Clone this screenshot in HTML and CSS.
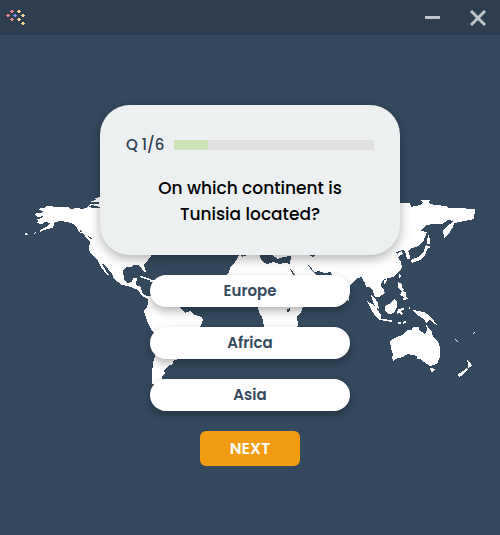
FILE: index.html
```html
<!DOCTYPE html>
<html lang="en">
<head>
<meta charset="utf-8">
<meta name="viewport" content="width=device-width, initial-scale=1">
<title>Continent quiz</title>
<link rel="stylesheet" href="styles.css">
</head>
<body>
<header class="titlebar">
  <svg class="logo" viewBox="0 0 20 17" aria-hidden="true">
    <path fill="#e58386" d="M5 1h2v1h1v1H7v1H5V3H4V2h1zM1 5h2v1h1v1H3v1H1V7H0V6h1zM5 9h2v1h1v1H7v1H5v-1H4v-1h1z"/>
    <path fill="#748bee" d="M8 5h2v1h1v1h-1v1H8V7H7V6h1z"/>
    <path fill="#f7da91" d="M12 1h2v1h1v1h-1v1h-2V3h-1V2h1zM16 5h2v1h1v1h-1v1h-2V7h-1V6h1zM12 9h2v1h1v1h-1v1h-2v-1h-1v-1h1zM16 13h2v1h1v1h-1v1h-2v-1h-1v-1h1z"/>
  </svg>
  <div class="window-controls">
    <button class="window-button" type="button" aria-label="Minimize">
      <svg viewBox="0 0 16 16" aria-hidden="true"><path d="M0 7.5h15" stroke-width="3"/></svg>
    </button>
    <button class="window-button" type="button" aria-label="Close">
      <svg viewBox="0 0 16 16" aria-hidden="true"><path d="M1 1l14 14M15 1L1 15" stroke-width="3"/></svg>
    </button>
  </div>
</header>
<main class="stage">
  <svg class="map" viewBox="0 35 500 500" aria-hidden="true" shape-rendering="crispEdges">
    <g fill="#fff">
      <!-- North and Central America -->
      <path d="M101 208L93 208 88 207 82 209 77 208 70 209 68 207 61 207 54 207 52 206 46 206 45 208 40 208 38 210 43 211 42 213 36 213 35 215 38 217 43 216 42 218 37 219 38 221 36 223 42 224 45 222 50 223 48 226 40 230 40 232 47 229 53 228 55 222 60 221 67 222 73 224 77 228 79 232 84 234 86 238 90 241 89 250 91 254 98 261 101 267 107 275 109 275 106 271 102 264 104 264 112 274 114 279 122 285 127 286 133 288 138 290 142 296 148 299 152 296 147 296 142 293 141 287 136 285 137 278 133 278 132 282 128 283 124 280 123 270 126 267 131 267 133 265 138 265 141 267 143 271 145 273 146 271 144 265 148 260 151 256 150 254 160 240 130 210z"/>
      <path d="M101 197L95 198 96 200 91 201 91 202 99 202 99 204 90 204 88 207 92 205 100 207zM25 233l3 1v1h-3zM33 234l2-2h1l-2 2zM140 276l5 1 5 2 2 2-4-1-8-3zM150 280h5v2h-5z"/>
      <!-- South America -->
      <path d="M149 296L148 302 147 308 144 310 145 315 148 323 151 329 155 334 156 346 155 357 153 363 152 373 152 384 158 386 163 380 162 377 165 373 164 371 166 368 168 366 173 364 173 361 178 359 185 348 195 340 198 328 201 325 203 320 202 317 195 315 190 311 185 313 180 308 170 298z"/>
      <!-- Africa, Europe and Asia -->
      <path d="M240 254L235 262 230 268 229 272 227 274 226 290 240 302 256 302 258 307 259 312 262 317 264 326 266 340 274 345 286 341 296 330 298 325 297 317 301 312 303 307 313 295 321 281 329 277 339 297 349 301 350 285 357 278 362 277 363 281 365 282 366 287 369 287 373 291 375 297 379 297 385 293 384 290 381 286 382 281 385 279 393 277 400 271 402 267 401 262 398 257 403 254 402 251 397 254 396 252 402 250 405 251 407 259 410 259 410 256 408 251 412 248 418 246 423 242 426 235 427 232 420 231 427 225 432 224 442 224 448 220 453 221 452 223 448 225 443 230 444 238 450 232 453 227 454 223 465 221 474 219 475 209 470 209 462 208 448 208 446 206 436 205 430 204 428 202 430 200 420 200 423 203 420 205 411 207 410 203 400 203 350 204 300 210z"/>
      <path d="M428 233l2 7v4h-3zM426 245l5 2-4 2-2 7-5 4-8 3-1-3 7-3 5-4zM400 273l1 3-2 2v-4zM384 280l3-1-1 4-2 1z"/>
      <!-- South-east Asia -->
      <path d="M367 301l5 3 5 5 4 6v4l11 1v2l-12-2-5-4-4-7zM371 295l4 3 3 5 1 6-3-1-3-6zM395 299l2 3v5l-3 6-5 1-4-3v-5l4-2 3-3zM398 282l4 2v4l2 2-3 1-3-4zM402 291l4 1v4l2 3-5 1 1-3-4-2zM398 309l6-1v2l-4 1 3 2-1 3-3-3-2 1zM409 306l1 2-1 2zM398 322h3v2h-3zM404 321l3 1-4 2zM413 310l5 1 6 1 6 4 4 5 3 4-3-1-4-4-4 3-2-4-5-3-4-3z"/>
      <!-- Australia and New Zealand -->
      <path d="M390 341L395 338 402 335 407 330 412 330 413 327 419 327 419 330 425 334 427 330 426 324 428 327 432 332 433 337 438 342 440 347 440 357 437 364 430 366 427 364 420 359 417 359 417 356 408 354 403 357 398 358 393 361 392 357 393 355 391 348z"/>
      <path d="M430 368l5 1-2 3h-2zM455 339l3 2-1 1zM472 334l3-2-2 3zM467 360l4 4 1 2-4 2v-5zM466 368l2 1-5 6-4 2-2-2 6-4z"/>
    </g>
    <!-- Seas and lakes -->
    <g fill="#34495e">
      <path d="M260 255l1 5 2 2 4 2 6-2 6 2 6-1 5 1 1-8-8 1-5 2-6-4zM240 255h7l-5 2zM290 269l2 1 3 5h-2zM308 265l3 2 3 5 5-1 5 2 7-1 1 3h-15l-4-3zM309 255h6l-2 2zM287 309l3-1v3l-3 1zM80 230l2 1-1 2zM88 236l4 2-1 2zM181 308l5-1-1 2 2-1v3l-3-1z"/>
    </g>
  </svg>
  <section class="quiz">
    <div class="card">
      <div class="status">
        <label class="count" for="progress">Q 1/6</label>
        <progress class="progress" id="progress" value="1" max="6"></progress>
      </div>
      <h1 class="question">On which continent is Tunisia located?</h1>
    </div>
    <button class="answer" type="button">Europe</button>
    <button class="answer" type="button">Africa</button>
    <button class="answer" type="button">Asia</button>
    <button class="next" type="button">NEXT</button>
  </section>
</main>
</body>
</html>
```
FILE: styles.css
```css
* {
  box-sizing: border-box;
}

body {
  margin: 0;
  min-height: 100vh;
  display: flex;
  flex-direction: column;
  background: #34495e;
  color: #2c3e50;
  font-family: Poppins, Inter, sans-serif;
}

button {
  border: 0;
  font: inherit;
  cursor: pointer;
}

.titlebar {
  height: 35px;
  padding: 0 14px 0 6px;
  display: flex;
  align-items: center;
  justify-content: space-between;
  background: #2c3e50;
}

.logo {
  width: 20px;
  height: 17px;
}

.window-controls {
  display: flex;
  gap: 29px;
}

.window-button {
  padding: 0;
  display: flex;
  background: none;
}

.window-button svg {
  width: 16px;
  height: 16px;
  stroke: #c0c5cb;
}

.stage {
  flex: 1;
  display: grid;
  align-items: center;
}

.map,
.quiz {
  grid-area: 1 / 1;
}

.map {
  width: 100%;
}

.quiz {
  position: relative;
  display: flex;
  flex-direction: column;
  align-items: center;
  gap: 20px;
}

.card {
  width: 60%;
  min-width: 300px;
  min-height: 150px;
  padding: 26px;
  border-radius: 30px;
  background: #ecf0f1;
  box-shadow: 0 4px 12px rgba(0, 0, 0, 0.3);
}

.status {
  display: flex;
  align-items: center;
  gap: 10px;
  font-size: 15px;
  font-weight: 500;
  line-height: 28px;
}

.count {
  flex: 0 0 38px;
  white-space: nowrap;
}

.progress {
  flex: 1;
  min-width: 0;
  height: 10px;
  appearance: none;
  border: 0;
  background: #e0e0e0;
}

.progress::-webkit-progress-bar {
  background: #e0e0e0;
}

.progress::-webkit-progress-value {
  background: #cde2b5;
}

.question {
  margin: 16px 20px 0;
  color: #000;
  font-size: 17px;
  font-weight: 500;
  line-height: 26px;
  text-align: center;
}

.answer {
  width: 40%;
  min-width: 200px;
  height: 32px;
  border-radius: 16px;
  background: #fff;
  color: #34495e;
  font-size: 15px;
  font-weight: 600;
  box-shadow: 0 4px 8px rgba(0, 0, 0, 0.3);
}

.next {
  width: 100px;
  height: 35px;
  border-radius: 6px;
  background: #f39c12;
  color: #fff;
  font-size: 16px;
  font-weight: 600;
}
```
